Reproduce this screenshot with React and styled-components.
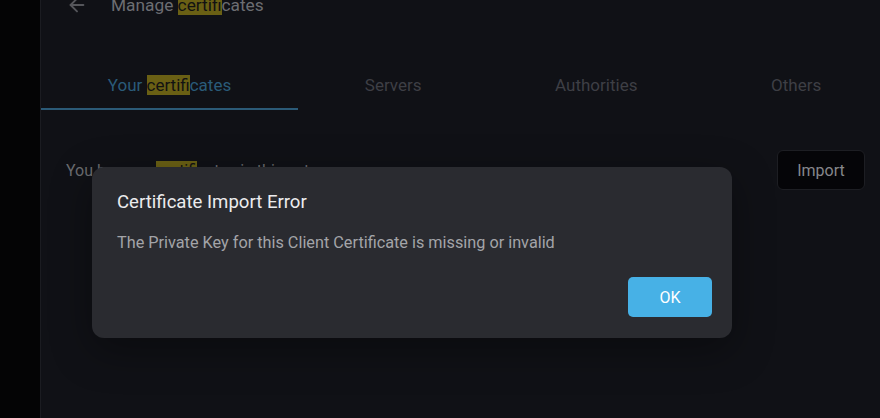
import React from "react";
import styled, { createGlobalStyle } from "styled-components";

const Global = createGlobalStyle`
  html, body { margin: 0; padding: 0; background: #101116; overflow: hidden; }
  body { font-family: Roboto, "Liberation Sans", sans-serif; }
  #root { width: 880px; height: 418px; }
`;

const Shell = styled.div`
  display: flex;
  width: 880px;
  height: 418px;
  position: relative;
  overflow: hidden;
`;

const Rail = styled.div`
  width: 40px;
  flex: none;
  background: #040405;
  border-right: 1px solid #1b1c21;
`;

const Main = styled.div`
  flex: none;
  width: 847px;
  display: flex;
  flex-direction: column;
  background: #101116;
`;

const Header = styled.div`
  display: flex;
  align-items: center;
  height: 48px;
  margin-top: -19px;
  padding-left: 25px;
  gap: 23px;
  color: #6c6d72;
  font-size: 17.3px;
`;

const Tabs = styled.div`
  display: flex;
  margin-top: 33px;
  height: 48px;
`;

const Tab = styled.div`
  flex: 1 1 auto;
  display: flex;
  align-items: center;
  justify-content: center;
  font-size: 17px;
  white-space: nowrap;
  color: ${(p) => (p.$active ? "#2a5b79" : "#3e3f45")};
  border-bottom: 2px solid ${(p) => (p.$active ? "#2b5a77" : "transparent")};
  box-sizing: border-box;
`;

const Mark = styled.mark`
  background: #6a6014;
  color: #121212;
  padding: 0;
`;

const Content = styled.div`
  display: flex;
  align-items: center;
  justify-content: space-between;
  padding: 40px 23px 0 25px;
`;

const Empty = styled.span`
  color: #6b6c70;
  font-size: 16px;
`;

const ImportButton = styled.button`
  height: 40px;
  width: 88px;
  border-radius: 6px;
  border: 1px solid #1d1e23;
  background: #050508;
  color: #86878b;
  font-family: inherit;
  font-size: 16px;
`;

const Dialog = styled.div`
  position: absolute;
  left: 92px;
  top: 167px;
  width: 640px;
  box-sizing: border-box;
  background: #2a2b30;
  border-radius: 12px;
  padding: 23px 20px 21px 25px;
  display: flex;
  flex-direction: column;
  box-shadow: 0 12px 40px rgba(0, 0, 0, 0.35);
`;

const Title = styled.h2`
  margin: 0;
  font-weight: 400;
  font-size: 18.6px;
  line-height: 24px;
  color: #ececee;
`;

const Body = styled.p`
  margin: 19px 0 0;
  font-size: 16.25px;
  line-height: 20px;
  color: #a3a4a8;
`;

const Actions = styled.div`
  display: flex;
  justify-content: flex-end;
  margin-top: 24px;
`;

const OkButton = styled.button`
  width: 84px;
  height: 40px;
  border: none;
  border-radius: 5px;
  background: #47b1e6;
  color: #ffffff;
  font-family: inherit;
  font-size: 16px;
`;

export default function App() {
  return (
    <>
      <Global />
      <Shell>
        <Rail />
        <Main>
          <Header>
            <svg width="22" height="22" viewBox="0 0 24 24" fill="none" stroke="#55565b" strokeWidth="2" strokeLinecap="round" strokeLinejoin="round">
              <path d="M19 12H5" />
              <path d="M12 19l-7-7 7-7" />
            </svg>
            <span>
              Manage <Mark>certif</Mark>icates
            </span>
          </Header>
          <Tabs>
            <Tab $active>
              <span>
                Your <Mark>certif</Mark>icates
              </span>
            </Tab>
            <Tab>Servers</Tab>
            <Tab>Authorities</Tab>
            <Tab>Others</Tab>
          </Tabs>
          <Content>
            <Empty>
              You have no <Mark>certif</Mark>icates in this category.
            </Empty>
            <ImportButton>Import</ImportButton>
          </Content>
        </Main>
        <Dialog>
          <Title>Certificate Import Error</Title>
          <Body>The Private Key for this Client Certificate is missing or invalid</Body>
          <Actions>
            <OkButton>OK</OkButton>
          </Actions>
        </Dialog>
      </Shell>
    </>
  );
}
